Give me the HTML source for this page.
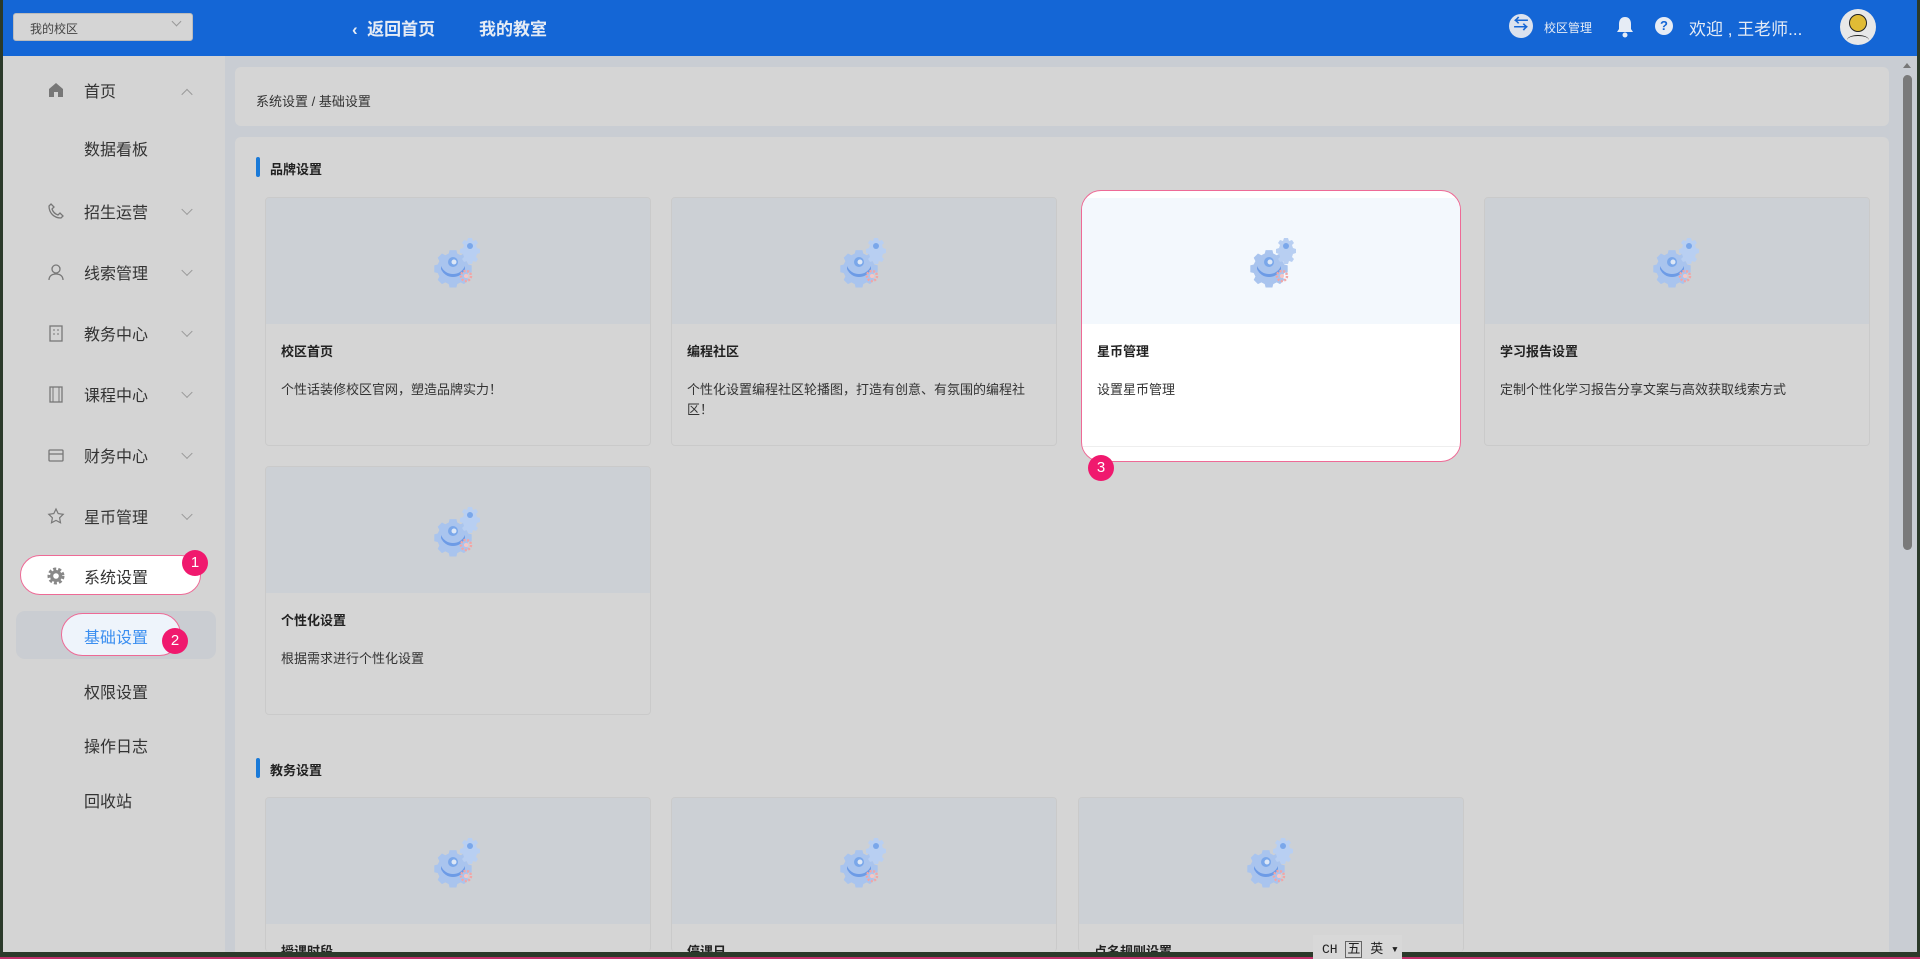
<!DOCTYPE html>
<html><head><meta charset="utf-8"><style>
*{margin:0;padding:0;box-sizing:border-box}
html,body{width:1920px;height:959px;overflow:hidden}
body{background:#c9cdd3;font-family:"Liberation Sans","Noto Sans CJK SC",sans-serif;color:#222}
#root{position:relative;width:1920px;height:959px;overflow:hidden;background:#c9cdd3}
.abs{position:absolute}
#hdr{left:0;top:0;width:1920px;height:56px;background:#1466d6;border-left:3px solid #2b3a2a}
.sel{left:10px;top:13px;width:180px;height:28px;background:#d5d5d5;border:1px solid #bbb;border-radius:3px;font-size:12px;color:#444;padding:6px 0 0 16px}
.hl{color:#e6ecf5;font-size:17px;font-weight:bold}
#side{left:0;top:56px;width:225px;height:903px;background:#d4d4d4;border-left:3px solid #2b3a2a}
.mi{position:absolute;left:84px;font-size:16px;color:#333;transform:translateY(-50%)}
.ic{position:absolute;left:47px;width:18px;height:18px;transform:translateY(-50%);color:#666}
.ch{position:absolute;left:183px;width:8px;height:8px;border-right:1.3px solid #999;border-bottom:1.3px solid #999;transform:translateY(-70%) rotate(45deg)}
.badge{position:absolute;width:26px;height:26px;border-radius:50%;background:#f0196e;color:#fff;font-size:15px;text-align:center;line-height:26px}
.panel{background:#d5d5d5;border-radius:6px}
.card{position:absolute;width:386px;height:249px;border:1px solid #cacaca;border-radius:4px;background:#d5d5d5;overflow:hidden}
.card .im{height:126px;background:#ccd0d5;position:relative}
.card .im svg{position:absolute;left:167px;top:38px}
.card .t{position:absolute;left:15px;top:143px;font-size:13px;font-weight:bold;color:#222}
.card .d{position:absolute;left:15px;top:182px;font-size:13px;color:#333;width:360px;line-height:20px}
.sec{position:absolute;left:256px;font-size:13px;font-weight:bold;color:#222;padding-left:14px}
.sec:before{content:"";position:absolute;left:0;top:-2px;width:4px;height:20px;border-radius:2px;background:#1a7ad8}
</style></head><body><div id="root">
<svg width="0" height="0" style="position:absolute"><defs>
<g id="gear">
<g transform="translate(20,26)"><path d="M-4,-14h8l1,4 4,2 4,-2 5,5-2,4 2,4 4,1v8l-4,1-2,4 2,4-5,5-4,-2-4,2-1,4h-8l-1,-4-4,-2-4,2-5,-5 2,-4-2,-4-4,-1v-8l4,-1 2,-4-2,-4 5,-5 4,2 4,-2z" transform="scale(.85)" fill="#a9c4ee"/><path d="M-12,4 a13,13 0 0 0 24,0 v3 a13,13 0 0 1 -24,0z" fill="#6d9be6"/><circle r="5" fill="#7aa7ea"/><circle r="2.5" cx="1" fill="#dde7f6"/></g>
<g transform="translate(37,10)"><path d="M-2,-8h4l1,3 3,-1 2,3-2,2 1,3 3,1v4l-3,1-1,3 2,2-2,3-3,-1-1,3h-4l-1,-3-3,1-2,-3 2,-2-1,-3-3,-1v-4l3,-1 1,-3-2,-2 2,-3 3,1z" fill="#b8cff2"/><circle r="3" fill="#7aa7ea"/></g>
<g transform="translate(33,40)"><circle r="5" fill="none" stroke="#f2a5a5" stroke-width="2.5" stroke-dasharray="2 1.5"/><circle r="2" fill="#f7c5c5"/></g>
</g></defs></svg>

<div id="hdr" class="abs">
<div class="sel abs">我的校区<span style="position:absolute;right:12px;top:4px;width:7px;height:7px;border-right:1px solid #999;border-bottom:1px solid #999;transform:rotate(45deg)"></span></div>
<div class="abs hl" style="left:349px;top:15px">‹&nbsp; 返回首页</div>
<div class="abs hl" style="left:476px;top:15px">我的教室</div>
<div class="abs" style="left:1506px;top:14px;width:24px;height:24px;border-radius:50%;background:#dbe2ee;color:#1466d6;font-size:15px;text-align:center;line-height:22px;font-weight:bold">⇆</div>
<div class="abs" style="left:1541px;top:19px;font-size:12px;color:#e6ecf5">校区管理</div>
<svg class="abs" style="left:1612px;top:16px" width="20" height="22" viewBox="0 0 20 22"><path d="M10 1c4 0 6 3 6 7v5l2 3H2l2-3V8c0-4 2-7 6-7z" fill="#e6ecf5"/><circle cx="10" cy="19" r="2.5" fill="#e6ecf5"/></svg>
<div class="abs" style="left:1652px;top:17px;width:18px;height:18px;border-radius:50%;background:#e6ecf5;color:#1466d6;font-size:13px;font-weight:bold;text-align:center;line-height:18px">?</div>
<div class="abs" style="left:1686px;top:15px;font-size:17px;color:#e6ecf5">欢迎 , 王老师...</div>
<div class="abs" style="left:1837px;top:9px;width:36px;height:36px;border-radius:50%;background:#e8e8e8">
<div class="abs" style="left:9px;top:5px;width:18px;height:18px;border-radius:50%;background:#e0bb35;border:1.5px solid #222"></div>
<div class="abs" style="left:7px;top:26px;width:22px;height:10px;border-top:1.5px solid #222;border-radius:50% 50% 0 0"></div></div>
</div>

<div id="side" class="abs"></div>
<svg class="ic" style="top:90px" viewBox="0 0 18 18"><path d="M9 2L2 8v8h5v-5h4v5h5V8z" fill="#777"/></svg>
<div class="mi" style="top:90px">首页</div><div class="ch" style="top:92px;transform:translateY(-20%) rotate(225deg)"></div>
<div class="mi" style="top:148px">数据看板</div>
<svg class="ic" style="top:211px" viewBox="0 0 18 18"><path d="M4 2l3 3-2 2c1 3 3 5 6 6l2-2 3 3-2 2C7 16 2 11 2 4z" fill="none" stroke="#777" stroke-width="1.3"/></svg>
<div class="mi" style="top:211px">招生运营</div><div class="ch" style="top:211px"></div>
<svg class="ic" style="top:272px" viewBox="0 0 18 18"><circle cx="9" cy="6" r="4" fill="none" stroke="#777" stroke-width="1.3"/><path d="M2 17c0-4 3-6 7-6s7 2 7 6" fill="none" stroke="#777" stroke-width="1.3"/></svg>
<div class="mi" style="top:272px">线索管理</div><div class="ch" style="top:272px"></div>
<svg class="ic" style="top:333px" viewBox="0 0 18 18"><rect x="3" y="2" width="12" height="15" fill="none" stroke="#777" stroke-width="1.3"/><path d="M6 6h2M10 6h2M6 10h2M10 10h2" stroke="#777"/></svg>
<div class="mi" style="top:333px">教务中心</div><div class="ch" style="top:333px"></div>
<svg class="ic" style="top:394px" viewBox="0 0 18 18"><rect x="3" y="2" width="12" height="15" fill="none" stroke="#777" stroke-width="1.3"/><path d="M6 2v15M12 2v15" stroke="#777"/></svg>
<div class="mi" style="top:394px">课程中心</div><div class="ch" style="top:394px"></div>
<svg class="ic" style="top:455px" viewBox="0 0 18 18"><rect x="2" y="4" width="14" height="11" rx="1" fill="none" stroke="#777" stroke-width="1.3"/><path d="M2 8h14" stroke="#777" stroke-width="1.3"/></svg>
<div class="mi" style="top:455px">财务中心</div><div class="ch" style="top:455px"></div>
<svg class="ic" style="top:516px" viewBox="0 0 18 18"><path d="M9 2l2.2 4.6 5 .7-3.6 3.5.9 5L9 13.4 4.5 15.8l.9-5L1.8 7.3l5-.7z" fill="none" stroke="#777" stroke-width="1.2"/></svg>
<div class="mi" style="top:516px">星币管理</div><div class="ch" style="top:516px"></div>

<div class="abs" style="left:20px;top:555px;width:181px;height:40px;border-radius:20px;background:#fff;border:1.5px solid #ee6a96"></div>
<svg class="ic" style="top:576px" viewBox="0 0 18 18"><circle cx="9" cy="9" r="7" fill="none" stroke="#888" stroke-width="3" stroke-dasharray="3 2"/><circle cx="9" cy="9" r="6" fill="#888"/><circle cx="9" cy="9" r="2.8" fill="#fff"/></svg>
<div class="mi" style="top:576px">系统设置</div>
<div class="badge" style="left:182px;top:550px">1</div>

<div class="abs" style="left:16px;top:611px;width:200px;height:48px;border-radius:9px;background:#cacdd2"></div>
<div class="abs" style="left:61px;top:613px;width:120px;height:43px;border-radius:22px;background:#eef4fb;border:1.5px solid #ee6a96"></div>
<div class="mi" style="top:636px;color:#3a8ef0">基础设置</div>
<div class="badge" style="left:162px;top:628px">2</div>
<div class="mi" style="top:691px">权限设置</div>
<div class="mi" style="top:745px">操作日志</div>
<div class="mi" style="top:800px">回收站</div>

<div class="abs panel" style="left:235px;top:67px;width:1654px;height:59px"></div>
<div class="abs" style="left:256px;top:91px;font-size:13px;color:#333">系统设置 / 基础设置</div>
<div class="abs panel" style="left:235px;top:137px;width:1654px;height:815px;border-radius:6px 6px 0 0"></div>

<div class="sec" style="top:159px">品牌设置</div>
<div class="card" style="left:265px;top:197px"><div class="im"><svg width="50" height="52"><use href="#gear"/></svg></div><div class="t">校区首页</div><div class="d">个性话装修校区官网，塑造品牌实力！</div></div>
<div class="card" style="left:671px;top:197px"><div class="im"><svg width="50" height="52"><use href="#gear"/></svg></div><div class="t">编程社区</div><div class="d">个性化设置编程社区轮播图，打造有创意、有氛围的编程社区！</div></div>
<div class="card" style="left:1081px;top:190px;width:380px;height:272px;border:1.5px solid #ee6a96;border-radius:20px;background:#fff"><div class="im" style="background:#f3f8fd;margin-top:7px"><svg width="50" height="52"><use href="#gear"/></svg></div><div class="t" style="top:150px">星币管理</div><div class="d" style="top:189px">设置星币管理</div><div class="abs" style="left:0;top:255px;width:100%;border-top:1px solid #eee"></div></div>
<div class="badge" style="left:1088px;top:455px">3</div>
<div class="card" style="left:1484px;top:197px"><div class="im"><svg width="50" height="52"><use href="#gear"/></svg></div><div class="t">学习报告设置</div><div class="d">定制个性化学习报告分享文案与高效获取线索方式</div></div>
<div class="card" style="left:265px;top:466px"><div class="im"><svg width="50" height="52"><use href="#gear"/></svg></div><div class="t">个性化设置</div><div class="d">根据需求进行个性化设置</div></div>

<div class="sec" style="top:760px">教务设置</div>
<div class="card" style="left:265px;top:797px;height:155px;border-bottom:0"><div class="im"><svg width="50" height="52"><use href="#gear"/></svg></div><div class="t">授课时段</div></div>
<div class="card" style="left:671px;top:797px;height:155px;border-bottom:0"><div class="im"><svg width="50" height="52"><use href="#gear"/></svg></div><div class="t">停课日</div></div>
<div class="card" style="left:1078px;top:797px;height:155px;border-bottom:0"><div class="im"><svg width="50" height="52"><use href="#gear"/></svg></div><div class="t">点名规则设置</div></div>

<div class="abs" style="left:1900px;top:56px;width:17px;height:896px;background:#c9cdd3"></div>
<div class="abs" style="left:1903px;top:75px;width:9px;height:475px;border-radius:5px;background:#7a7a7a"></div>
<div class="abs" style="left:1903px;top:63px;border:4px solid transparent;border-bottom:5px solid #777;border-top:0"></div>
<div class="abs" style="left:1917px;top:0;width:3px;height:959px;background:#2b3a2a"></div>
<div class="abs" style="left:0;top:952px;width:1920px;height:7px;background:#2b3a2a;border-bottom:2px solid #c0306a"></div>
<div class="abs" style="left:1313px;top:935px;width:89px;height:24px;background:#d8d8d8;font-size:13px;padding:3px 0 0 9px;font-family:'Liberation Mono','Noto Sans CJK SC',monospace">CH <span style="border:1px solid #666;padding:0 1px">五</span> 英 ▾</div>
</div></body></html>
